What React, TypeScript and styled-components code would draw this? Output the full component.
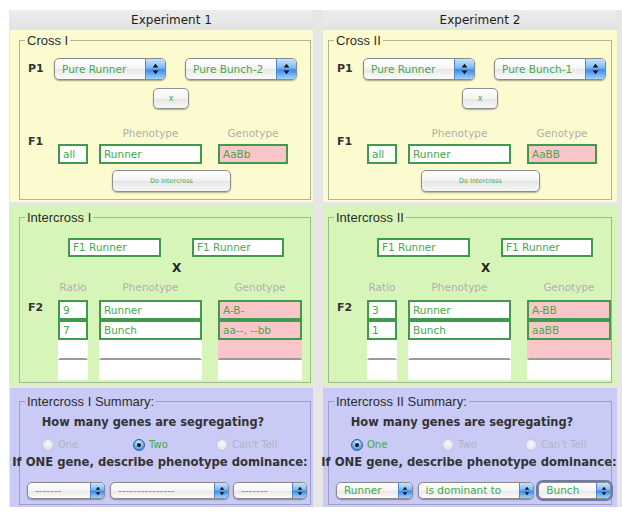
import styled, { createGlobalStyle } from 'styled-components';

const ui = '"DejaVu Sans", Verdana, sans-serif';
const legendFont = '"Liberation Sans", Arial, sans-serif';
const green = '#45a84c';
const boxBorder = '#3f9a4d';

type Tone = 'cross' | 'inter' | 'summary';

const tones: Record<Tone, { bg: string; line: string; height: number; top: number }> = {
	cross: { bg: '#fcfbd0', line: '#b3b198', height: 172, top: 3 },
	inter: { bg: '#d8f5b9', line: '#a0b891', height: 180, top: 5 },
	summary: { bg: '#c9cbf6', line: '#9c9ec6', height: 119, top: 6 },
};

interface Experiment {
	title: string;
	cross: string;
	intercross: string;
	parents: [string, string];
	f1: [string, string, string];
	rows: string[][];
	segregating: string;
	dominance: [string, string, string];
	chosen: boolean;
	inset: [number, number];
}

const experiments: Experiment[] = [
	{
		title: 'Experiment 1',
		cross: 'Cross I',
		intercross: 'Intercross I',
		parents: ['Pure Runner', 'Pure Bunch-2'],
		f1: ['all', 'Runner', 'AaBb'],
		rows: [
			['9', 'Runner', 'A-B-'],
			['7', 'Bunch', 'aa--, --bb'],
		],
		segregating: 'Two',
		dominance: ['-------', '---------------', '-------'],
		chosen: false,
		inset: [9, 2],
	},
	{
		title: 'Experiment 2',
		cross: 'Cross II',
		intercross: 'Intercross II',
		parents: ['Pure Runner', 'Pure Bunch-1'],
		f1: ['all', 'Runner', 'AaBB'],
		rows: [
			['3', 'Runner', 'A-BB'],
			['1', 'Bunch', 'aaBB'],
		],
		segregating: 'One',
		dominance: ['Runner', 'is dominant to', 'Bunch'],
		chosen: true,
		inset: [5, 5],
	},
];

const options = ['One', 'Two', "Can't Tell"];

function Arrows({ small }: { small?: boolean }) {
	return (
		<svg width={small ? 6 : 7} height={small ? 10 : 12} viewBox="0 0 7 12">
			<path d="M3.5 0.8 L6.3 4.6 H0.7Z M3.5 11.2 L6.3 7.4 H0.7Z" fill="#111" />
		</svg>
	);
}

interface PopupProps {
	value: string;
	width: number;
	height: number;
	muted?: boolean;
	focused?: boolean;
}

function Popup({ value, width, height, muted, focused }: PopupProps) {
	const small = height < 20;
	return (
		<PopupBox $w={width} $h={height} $focused={focused}>
			<PopupText $muted={muted} $h={height}>
				{value}
			</PopupText>
			<PopupArrows $w={small ? 14 : 20}>
				<Arrows small={small} />
			</PopupArrows>
		</PopupBox>
	);
}

function ExperimentColumn({ exp }: { exp: Experiment }) {
	const [l, r] = exp.inset;
	const rows = [...exp.rows, ['', '', ''], ['', '', '']];

	return (
		<Column>
			<Header>{exp.title}</Header>

			<Panel $tone="cross">
				<Group $tone="cross" $l={l} $r={r}>
					<Legend>{exp.cross}</Legend>
					<ParentRow>
						<RowLabel>P1</RowLabel>
						<Popup value={exp.parents[0]} width={112} height={22} />
						<Popup value={exp.parents[1]} width={112} height={22} />
					</ParentRow>
					<PushButton $w={36} $h={21} $ml={133} $mt={8} $size={8}>
						x
					</PushButton>
					<FieldGrid $labelRow={18} $mt={17}>
						<RowLabel $span={2} $pt={9}>
							F1
						</RowLabel>
						<span />
						<ColumnLabel>Phenotype</ColumnLabel>
						<GenoLabel $w={70}>Genotype</GenoLabel>
						<Cell $filled>{exp.f1[0]}</Cell>
						<Cell $filled>{exp.f1[1]}</Cell>
						<GenoCell $filled $pink $w={70}>
							{exp.f1[2]}
						</GenoCell>
					</FieldGrid>
					<PushButton $w={119} $h={22} $ml={92} $mt={6} $size={6.5}>
						Do Intercross
					</PushButton>
				</Group>
			</Panel>

			<Panel $tone="inter">
				<Group $tone="inter" $l={l} $r={r}>
					<Legend>{exp.intercross}</Legend>
					<ParentBoxes>
						<Cell $filled $h={19}>
							F1 Runner
						</Cell>
						<Cell $filled $h={19}>
							F1 Runner
						</Cell>
					</ParentBoxes>
					<CrossMark>X</CrossMark>
					<FieldGrid $labelRow={20} $mt={5}>
						<span />
						<ColumnLabel>Ratio</ColumnLabel>
						<ColumnLabel>Phenotype</ColumnLabel>
						<GenoLabel $w={84}>Genotype</GenoLabel>
						{rows.map((row, i) => (
							<Row key={i}>
								{i === 0 ? <RowLabel $pt={1}>F2</RowLabel> : <span />}
								<Cell $filled={row[0] !== ''} $divider={i === 2}>
									{row[0]}
								</Cell>
								<Cell $filled={row[1] !== ''} $divider={i === 2}>
									{row[1]}
								</Cell>
								<GenoCell
									$filled={row[2] !== ''}
									$pink={i < 3}
									$divider={i === 2}
									$w={84}
								>
									{row[2]}
								</GenoCell>
							</Row>
						))}
					</FieldGrid>
				</Group>
			</Panel>

			<Panel $tone="summary">
				<Group $tone="summary" $l={l} $r={r}>
					<Legend>{exp.intercross} Summary:</Legend>
					<Question>How many genes are segregating?</Question>
					<RadioRow>
						{options.map((opt) => (
							<RadioItem key={opt}>
								<RadioDot $on={exp.segregating === opt} />
								<RadioText $on={exp.segregating === opt}>{opt}</RadioText>
							</RadioItem>
						))}
					</RadioRow>
					<Dominance>
						<span>If ONE gene, describe phenotype dominance:</span>
					</Dominance>
					<DominanceRow>
						<Popup value={exp.dominance[0]} width={78} height={17} muted={!exp.chosen} />
						<Popup value={exp.dominance[1]} width={119} height={17} muted={!exp.chosen} />
						<Popup
							value={exp.dominance[2]}
							width={74}
							height={17}
							muted={!exp.chosen}
							focused={exp.chosen}
						/>
					</DominanceRow>
				</Group>
			</Panel>
		</Column>
	);
}

export default function App() {
	return (
		<>
			<GlobalStyle />
			<Page>
				<Board>
					{experiments.map((exp) => (
						<ExperimentColumn key={exp.title} exp={exp} />
					))}
				</Board>
			</Page>
		</>
	);
}

const GlobalStyle = createGlobalStyle`
	html, body {
		margin: 0;
		padding: 0;
		background: #fff;
	}
	* {
		box-sizing: border-box;
	}
`;

const Page = styled.div`
	width: 622px;
	height: 514px;
	padding: 10px 0 0 9px;
	background: #fff;
	overflow: hidden;
`;

const Board = styled.div`
	display: grid;
	grid-template-columns: 303px 294px;
	column-gap: 10px;
	padding-left: 1px;
	height: 497px;
	background: #e6e6e6;
`;

const Column = styled.section`
	display: flex;
	flex-direction: column;
	min-width: 0;
`;

const Header = styled.h2`
	margin: 0;
	height: 20px;
	padding-left: 20px;
	font: normal 12px/20px ${ui};
	color: #1c1c1c;
	text-align: center;
	background: linear-gradient(#ececec, #e3e3e3);
`;

const Panel = styled.div<{ $tone: Tone }>`
	display: flex;
	height: ${({ $tone }) => tones[$tone].height}px;
	background: ${({ $tone }) => tones[$tone].bg};
	& + & {
		margin-top: 3px;
	}
`;

const Group = styled.fieldset<{ $tone: Tone; $l: number; $r: number }>`
	flex: 1;
	min-width: 0;
	margin: ${({ $tone }) => tones[$tone].top}px ${({ $r }) => $r}px 2px
		${({ $l }) => $l}px;
	padding: 0;
	border: 1px solid ${({ $tone }) => tones[$tone].line};
`;

const Legend = styled.legend`
	margin-left: 5px;
	padding: 0 2px;
	font: 13px/15px ${legendFont};
	color: #2b2b2b;
`;

const ParentRow = styled.div`
	display: grid;
	grid-template-columns: 26px 131px 112px;
	align-items: center;
	margin-top: 10px;
	padding-left: 8px;
`;

const RowLabel = styled.span<{ $span?: number; $pt?: number }>`
	grid-row: span ${({ $span }) => $span ?? 1};
	align-self: start;
	padding-top: ${({ $pt }) => $pt ?? 0}px;
	font: bold 11px/14px ${ui};
	color: #333;
	${ParentRow} & {
		align-self: center;
	}
`;

const PopupBox = styled.div<{ $w: number; $h: number; $focused?: boolean }>`
	display: flex;
	width: ${({ $w }) => $w}px;
	height: ${({ $h }) => $h}px;
	border: 1px solid #8a8a8a;
	border-radius: 5px;
	background: linear-gradient(#ffffff, #f4f4f4 50%, #e8e8e8 52%, #fbfbfb);
	box-shadow: 0 1px 1.5px rgba(0, 0, 0, 0.35);
	overflow: hidden;
	${({ $focused }) =>
		$focused && `outline: 2px solid #6b7aa8; outline-offset: 0;`}
`;

const PopupText = styled.span<{ $muted?: boolean; $h: number }>`
	flex: 1;
	min-width: 0;
	padding-left: 7px;
	font: 10.5px/${({ $h }) => $h - 2}px ${ui};
	color: ${({ $muted }) => ($muted ? '#8a8a8a' : green)};
	white-space: nowrap;
	overflow: hidden;
`;

const PopupArrows = styled.span<{ $w: number }>`
	display: flex;
	align-items: center;
	justify-content: center;
	width: ${({ $w }) => $w}px;
	border-left: 1px solid #4f86cc;
	background: linear-gradient(#c8e4fd, #7bb8f4 45%, #3e8ae8 55%, #a0d3fb);
`;

const PushButton = styled.div<{
	$w: number;
	$h: number;
	$ml: number;
	$mt: number;
	$size: number;
}>`
	display: flex;
	align-items: center;
	justify-content: center;
	width: ${({ $w }) => $w}px;
	height: ${({ $h }) => $h}px;
	margin: ${({ $mt }) => $mt}px 0 0 ${({ $ml }) => $ml}px;
	border: 1px solid #8e8e8e;
	border-radius: 5px;
	background: linear-gradient(#ffffff, #f3f3f3 50%, #e6e6e6 52%, #f7f7f7);
	box-shadow: 0 1px 1.5px rgba(0, 0, 0, 0.3);
	font: ${({ $size }) => $size}px/1 ${ui};
	color: ${green};
`;

const FieldGrid = styled.div<{ $labelRow: number; $mt: number }>`
	display: grid;
	grid-template-columns: 19px 30px 103px 1fr;
	grid-template-rows: ${({ $labelRow }) => $labelRow}px;
	column-gap: 11px;
	margin-top: ${({ $mt }) => $mt}px;
	padding-left: 8px;
`;

const Row = styled.div`
	display: contents;
`;

const ColumnLabel = styled.span`
	align-self: start;
	font: 10.5px/14px ${ui};
	color: #b0b0b0;
	text-align: center;
	white-space: nowrap;
`;

const GenoLabel = styled(ColumnLabel)<{ $w: number }>`
	width: ${({ $w }) => $w}px;
	margin-left: 5px;
`;

const Cell = styled.div<{
	$filled?: boolean;
	$pink?: boolean;
	$divider?: boolean;
	$h?: number;
}>`
	height: ${({ $h }) => $h ?? 20}px;
	padding-left: 3px;
	border: 2px solid ${({ $filled }) => ($filled ? boxBorder : 'transparent')};
	${({ $divider }) => $divider && `border-bottom-color: #9a9a9a;`}
	background: ${({ $pink }) => ($pink ? '#fac6c9' : '#fff')};
	font: 10.5px/${({ $h }) => ($h ?? 20) - 4}px ${ui};
	color: ${green};
	white-space: nowrap;
	overflow: hidden;
`;

const GenoCell = styled(Cell)<{ $w: number }>`
	width: ${({ $w }) => $w}px;
	margin-left: 5px;
`;

const ParentBoxes = styled.div`
	display: grid;
	grid-template-columns: 93px 92px;
	column-gap: 31px;
	margin-top: 13px;
	padding-left: 48px;
`;

const CrossMark = styled.div`
	margin: 4px 0 0 152px;
	font: bold 12px/14px ${ui};
	color: #222;
`;

const Question = styled.div`
	width: 266px;
	margin-top: 6px;
	font: bold 11.4px/15px ${ui};
	color: #333;
	text-align: center;
	white-space: nowrap;
`;

const RadioRow = styled.div`
	display: grid;
	grid-template-columns: 91px 83px auto;
	margin-top: 8px;
	padding-left: 22px;
`;

const RadioItem = styled.div`
	display: flex;
	align-items: center;
	gap: 4px;
	height: 14px;
`;

const RadioDot = styled.span<{ $on: boolean }>`
	position: relative;
	width: 12px;
	height: 12px;
	border-radius: 50%;
	${({ $on }) =>
		$on
			? `
		border: 1px solid #2f5c9c;
		background: radial-gradient(circle at 50% 30%, #e0f2ff 0%, #78bcf5 45%, #2f78d6 100%);
		&::after {
			content: '';
			position: absolute;
			left: 3px;
			top: 3px;
			width: 4px;
			height: 4px;
			border-radius: 50%;
			background: #111;
		}
	`
			: `
		border: 1px solid #c3c4dc;
		background: radial-gradient(circle at 50% 35%, #f7f7fc, #dcdcea);
	`}
`;

const RadioText = styled.span<{ $on: boolean }>`
	font: 10px/14px ${ui};
	color: ${({ $on }) => ($on ? green : '#b3b4c6')};
`;

const Dominance = styled.div`
	display: flex;
	justify-content: center;
	width: 280px;
	margin-top: 3px;
	font: bold 11.6px/15px ${ui};
	color: #333;
	white-space: nowrap;
`;

const DominanceRow = styled.div`
	display: flex;
	gap: 5px;
	margin-top: 12px;
	padding-left: 7px;
	& > :last-child {
		margin-left: -1px;
	}
`;
